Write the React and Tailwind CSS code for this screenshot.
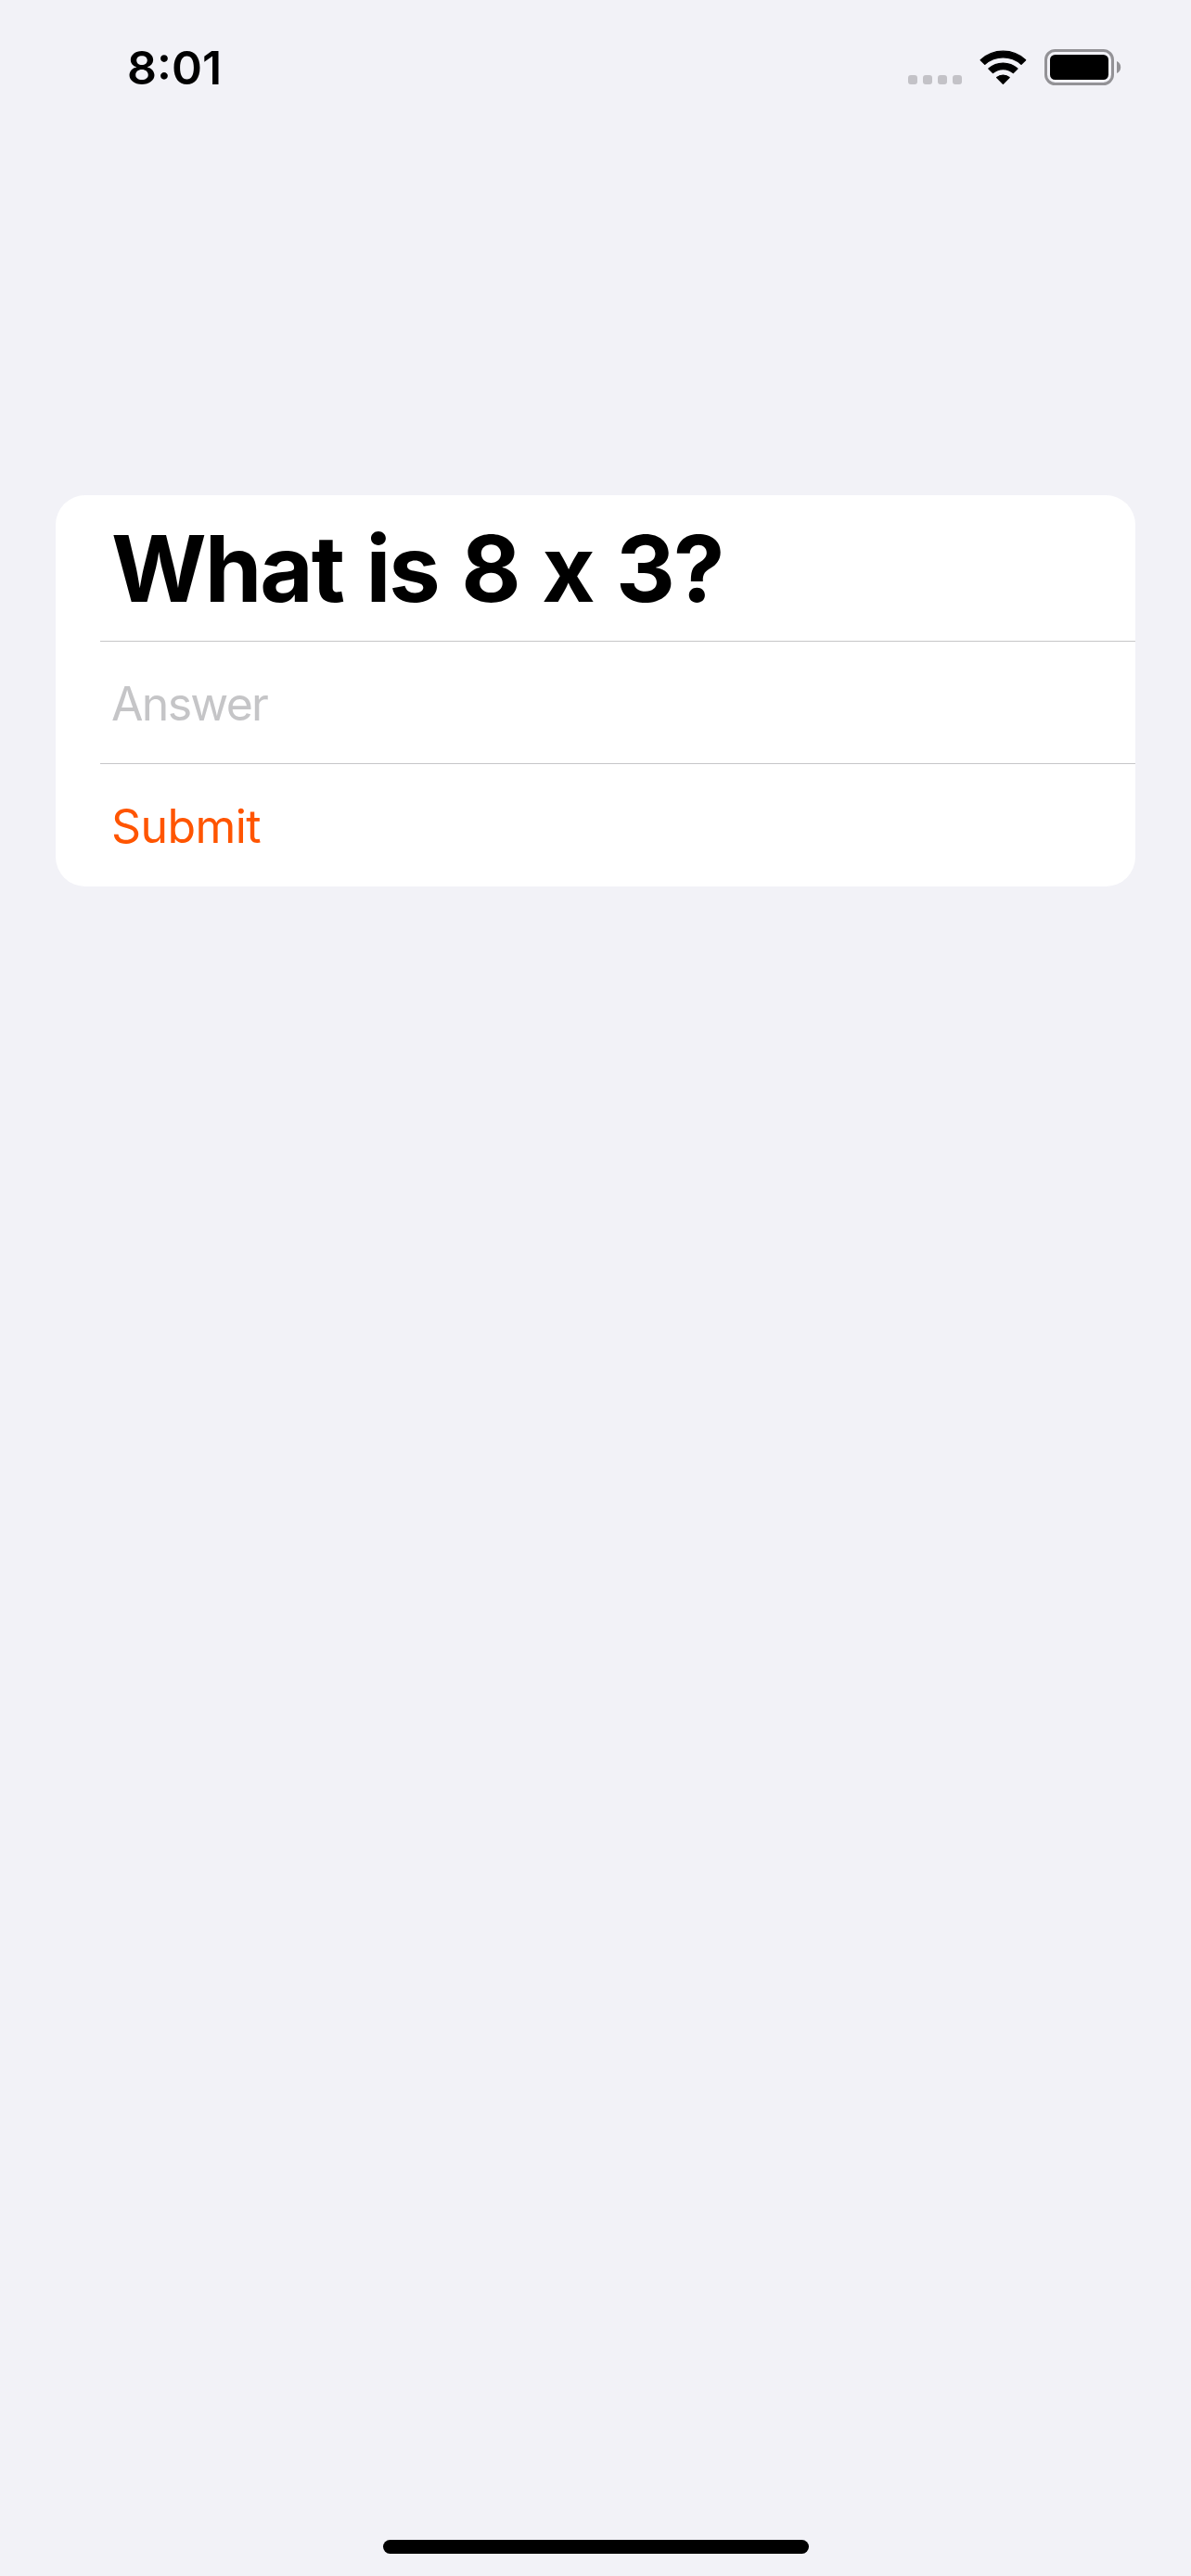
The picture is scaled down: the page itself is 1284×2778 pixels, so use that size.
function StatusBar() {
  return (
    <header className="flex h-[145px] items-center justify-between pr-[75px] pl-[137px]">
      <time className="pt-px text-[50px] leading-none font-semibold">8:01</time>
      <div className="flex items-end">
        <div className="mb-px flex gap-1.5">
          {[0, 1, 2, 3].map((i) => (
            <span key={i} className="size-2.5 rounded-[3px] bg-[#c3c2c7]" />
          ))}
        </div>
        <svg viewBox="0 0 51 38" className="ml-[19px] h-[38px] w-[51px]" strokeLinejoin="round" stroke="#000" strokeWidth="1.4">
          <path d="M1.2 10.7A35.5 35.5 0 0 1 49.6 10.7L45 15.2A29.7 29.7 0 0 0 5.8 15.2Z" />
          <path d="M9.9 20A23.3 23.3 0 0 1 40.9 20L36.3 24.5A17 17 0 0 0 14.5 24.5Z" />
          <path d="M18.7 29.5A10.5 10.5 0 0 1 32.1 29.5L25.4 36.2Z" />
        </svg>
        <svg viewBox="0 0 83 39" className="ml-[19px] h-[39px] w-[83px]">
          <rect x="1.5" y="1.5" width="72" height="36" rx="10" fill="none" stroke="#939296" strokeWidth="3" />
          <rect x="6" y="6" width="63" height="27" rx="5.5" />
          <path d="M78 13C80.6 14 82.2 16.4 82.2 19.5S80.6 25 78 26Z" fill="#939296" />
        </svg>
      </div>
    </header>
  );
}

export default function App() {
  return (
    <div className="flex h-[2778px] w-[1284px] flex-col bg-[#f2f2f7] font-['Inter',sans-serif] text-black">
      <StatusBar />
      <form className="mx-[60px] mt-[389px] h-[422px] overflow-hidden rounded-[32px] bg-white pl-12" onSubmit={(e) => e.preventDefault()}>
        <h1 className="h-[158px] border-b border-[#c6c6c8] pt-px pl-3 text-[99px] leading-[156px] font-bold tracking-[-2px] [font-variant-ligatures:no-contextual] [word-spacing:3px]">
          What is 8 x 3?
        </h1>
        <div className="h-[132px] border-b border-[#c6c6c8]">
          <input
            aria-label="Answer"
            placeholder="Answer"
            className="h-[131px] w-full pt-[3px] pl-3 text-[50px] leading-[76px] tracking-[-1.7px] outline-none placeholder:text-[#c5c5c7]"
          />
        </div>
        <button className="block h-[132px] w-full pt-[2px] pl-3 text-left text-[50px] leading-none tracking-[-0.6px] text-[#ff5500]">
          Submit
        </button>
      </form>
      <div className="mt-auto mb-[24px] ml-[413px] h-[15px] w-[459px] rounded-full bg-black" />
    </div>
  );
}
